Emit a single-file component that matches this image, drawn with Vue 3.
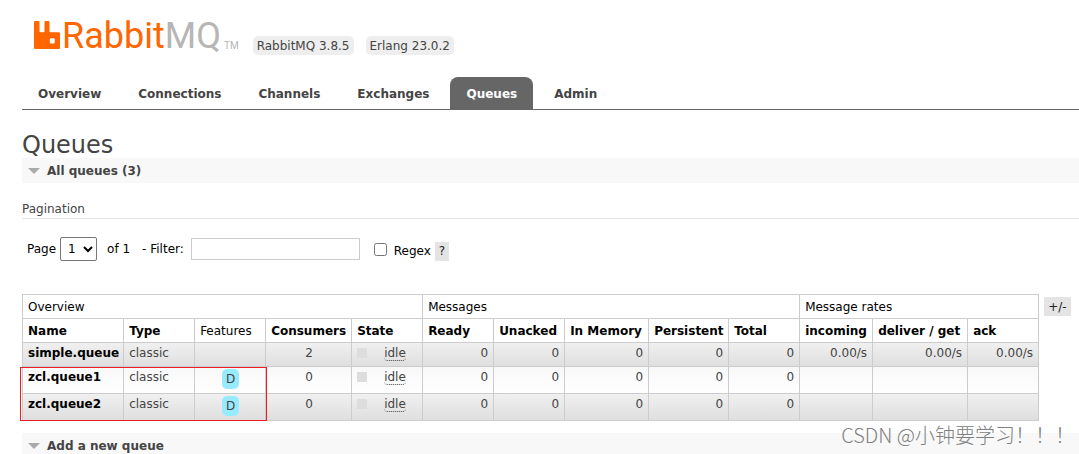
<script setup>
import { ref } from 'vue'

const tabs = ['Overview', 'Connections', 'Channels', 'Exchanges', 'Queues', 'Admin']
const activeTab = ref('Queues')
const page = ref('1')
const filter = ref('')
const regex = ref(false)

const groups = [
  { label: 'Overview', span: 5 },
  { label: 'Messages', span: 5 },
  { label: 'Message rates', span: 3 },
]
const columns = [
  { label: 'Name', key: 'name' },
  { label: 'Type', key: 'type' },
  { label: 'Features', key: 'features', plain: true },
  { label: 'Consumers', key: 'consumers' },
  { label: 'State', key: 'state' },
  { label: 'Ready', key: 'ready' },
  { label: 'Unacked', key: 'unacked' },
  { label: 'In Memory', key: 'memory' },
  { label: 'Persistent', key: 'persistent' },
  { label: 'Total', key: 'total' },
  { label: 'incoming', key: 'incoming' },
  { label: 'deliver / get', key: 'deliver' },
  { label: 'ack', key: 'ack' },
]
const counts = [0, 0, 0, 0, 0]
const queues = [
  { name: 'simple.queue', durable: false, consumers: 2, rates: ['0.00/s', '0.00/s', '0.00/s'] },
  { name: 'zcl.queue1', durable: true, consumers: 0, rates: ['', '', ''] },
  { name: 'zcl.queue2', durable: true, consumers: 0, rates: ['', '', ''] },
]
</script>

<template>
  <div class="page">
    <header class="header">
      <a class="logo" href="#" aria-label="RabbitMQ">
        <svg class="mark" viewBox="0 0 26 28" aria-hidden="true">
          <path
            fill="#ff6600"
            fill-rule="evenodd"
            d="M1.200 0H4.500Q5.500 0 5.500 1V10.200Q5.500 11.200 6.500 11.200H9.500Q10.500 11.200 10.500 10.200V1Q10.500 0 11.500 0H14.500Q15.500 0 15.500 1V10.200Q15.500 11.200 16.500 11.200H25Q26 11.200 26 12.200V27Q26 28 25 28H1Q0 28 0 27V1.200Q0 0 1.200 0ZM17 17.200Q15.800 17.200 15.800 18.400V21.200Q15.800 22.400 17 22.400H19.600Q20.800 22.400 20.800 21.200V18.400Q20.800 17.200 19.600 17.200Z"
          />
        </svg>
        <span class="wordmark">Rabbit<span class="mq">MQ</span></span>
        <span class="tm">TM</span>
      </a>
      <span class="version">RabbitMQ 3.8.5</span>
      <span class="version">Erlang 23.0.2</span>
    </header>

    <nav class="tabs">
      <a
        v-for="tab in tabs"
        :key="tab"
        href="#"
        :class="{ active: tab === activeTab }"
        @click.prevent="activeTab = tab"
      >{{ tab }}</a>
    </nav>

    <main>
      <h1>Queues</h1>
      <h2 class="section"><span class="arrow"></span>All queues (3)</h2>

      <h3>Pagination</h3>
      <form class="pager" @submit.prevent>
        <label for="page">Page</label>
        <select id="page" v-model="page">
          <option>1</option>
        </select>
        <span class="of">of 1</span>
        <label class="filter-label" for="filter">- Filter:</label>
        <input id="filter" v-model="filter" class="filter" type="text" />
        <input id="regex" v-model="regex" class="check" type="checkbox" />
        <label class="low" for="regex">Regex</label>
        <button class="small low" type="button">?</button>
      </form>

      <div class="listing">
        <div class="table-wrap">
          <table>
            <colgroup>
              <col v-for="c in columns" :key="c.key" :class="'c-' + c.key" />
            </colgroup>
            <thead>
              <tr>
                <th v-for="g in groups" :key="g.label" class="plain" :colspan="g.span">{{ g.label }}</th>
              </tr>
              <tr>
                <th v-for="c in columns" :key="c.key" :class="{ plain: c.plain }">{{ c.label }}</th>
              </tr>
            </thead>
            <tbody>
              <tr v-for="q in queues" :key="q.name">
                <td><a class="name" href="#">{{ q.name }}</a></td>
                <td>classic</td>
                <td class="center"><abbr v-if="q.durable" class="feature">D</abbr></td>
                <td class="center">{{ q.consumers }}</td>
                <td>
                  <div class="state"><i></i><abbr>idle</abbr></div>
                </td>
                <td v-for="(n, i) in counts" :key="'n' + i" class="num">{{ n }}</td>
                <td v-for="(r, i) in q.rates" :key="'r' + i" class="num">{{ r }}</td>
              </tr>
            </tbody>
          </table>
          <div class="highlight"></div>
        </div>
        <button class="small" type="button">+/-</button>
      </div>

      <h2 class="section"><span class="arrow"></span>Add a new queue</h2>
    </main>

    <div class="watermark">CSDN @小钟要学习！！！</div>
  </div>
</template>

<style>
body {
  margin: 0;
  background: #fff;
}
</style>

<style scoped>
.page {
  position: relative;
  box-sizing: border-box;
  height: 100vh;
  overflow: hidden;
  padding-left: 22px;
  color: #444;
  font: 12px/17px "DejaVu Sans", Verdana, sans-serif;
}
a {
  color: inherit;
  text-decoration: none;
}
.header {
  display: flex;
  align-items: flex-start;
  gap: 12px;
  height: 77px;
}
.logo {
  display: flex;
  align-items: flex-start;
  padding: 21px 0 0 12px;
  margin-right: 2px;
}
.mark {
  width: 26px;
  height: 28px;
}
.wordmark {
  margin-left: 2px;
  color: #f60;
  font: 36px/31px Roboto, sans-serif;
}
.mq {
  color: #b6b6b6;
}
.tm {
  margin: 18px 0 0 3px;
  color: #b6b6b6;
  font: 10px/14px Roboto, sans-serif;
}
.version {
  margin-top: 36px;
  padding: 2px 4px 0;
  border-radius: 5px;
  background: #eee;
}
.tabs {
  display: flex;
  gap: 5px;
  border-bottom: 1px solid #666;
}
.tabs a {
  padding: 9px 16px 6px;
  border-radius: 8px 8px 0 0;
  font-weight: bold;
}
.tabs .active {
  background: #666;
  color: #fff;
}
h1 {
  margin: 22px 0 0;
  font-size: 24px;
  font-weight: normal;
  line-height: 26px;
}
.section {
  display: flex;
  align-items: center;
  margin: 0;
  padding: 5px 6px 3px;
  background: #f8f8f8;
  font-size: 12px;
  line-height: 17px;
}
.arrow {
  margin: 0 7px 2px 0;
  border: 6px solid transparent;
  border-top-color: #aaa;
  border-bottom: 0;
}
h3 {
  margin: 17px 0 0;
  border-bottom: 1px solid #e4e4e4;
  font-size: 12px;
  font-weight: normal;
  line-height: 18px;
}
.pager {
  display: flex;
  align-items: center;
  margin: 18px 0 33px 5px;
  color: #000;
}
select {
  width: 37px;
  height: 24px;
  margin: 0 10px 0 4px;
  padding: 0 3px;
  border: 1px solid #767676;
  border-radius: 2px;
  background: #fff;
  color: #000;
  font: inherit;
}
.filter-label {
  margin: 0 7px 0 12px;
}
.filter {
  box-sizing: border-box;
  width: 169px;
  height: 22px;
  border: 1px solid #ccc;
  font: inherit;
}
.check {
  width: 13px;
  height: 13px;
  margin: 0 7px 0 14px;
}
.low {
  margin-top: 5px;
}
.small {
  margin-left: 4px;
  padding: 1px 4px;
  border: 0;
  background: #e4e4e4;
  color: #222;
  font: inherit;
}
.listing {
  display: flex;
  align-items: flex-start;
  margin-bottom: 12px;
}
.listing .small {
  margin: 3px 0 0 5px;
  padding: 2px 4px 0;
}
.table-wrap {
  position: relative;
}
table {
  border-collapse: collapse;
}
th,
td {
  padding: 4px 4px 2px 5px;
  border: 1px solid #ccc;
  text-align: left;
  vertical-align: top;
  white-space: nowrap;
}
th {
  color: #000;
}
td {
  padding: 2px 4px 4px 5px;
}
th.plain {
  font-weight: normal;
}
tbody tr {
  background: linear-gradient(#f0f0f0, #dedede);
}
tbody tr:nth-child(even) {
  background: linear-gradient(#f8f8f8, #fff);
}
.c-name { width: 101px; }
.c-type,
.c-features,
.c-state,
.c-ready,
.c-unacked,
.c-total,
.c-ack { width: 71px; }
.c-consumers { width: 86px; }
.c-memory { width: 84px; }
.c-persistent { width: 80px; }
.c-incoming { width: 73px; }
.c-deliver { width: 95px; }
.name {
  color: #000;
  font-weight: bold;
}
.center {
  text-align: center;
}
.num {
  padding-right: 5px;
  text-align: right;
}
.feature {
  display: block;
  width: 17px;
  margin: 0 auto;
  padding: 2px 0 1px;
  border-radius: 5px;
  background: #98ebff;
}
.state {
  display: flex;
  align-items: flex-start;
}
.state i {
  width: 10px;
  height: 10px;
  margin: 3px 17px 0 0;
  background: #ddd;
}
.state abbr {
  height: 15px;
  border-bottom: 1px dotted #444;
  border-radius: 4px;
}
.highlight {
  position: absolute;
  left: -2px;
  bottom: 0;
  width: 245px;
  height: 52px;
  border: 1px solid #ed1c24;
}
.watermark {
  position: absolute;
  right: 4px;
  bottom: 4px;
  color: #808080;
  font: 300 20px/30px "Noto Sans CJK SC", sans-serif;
}
</style>
